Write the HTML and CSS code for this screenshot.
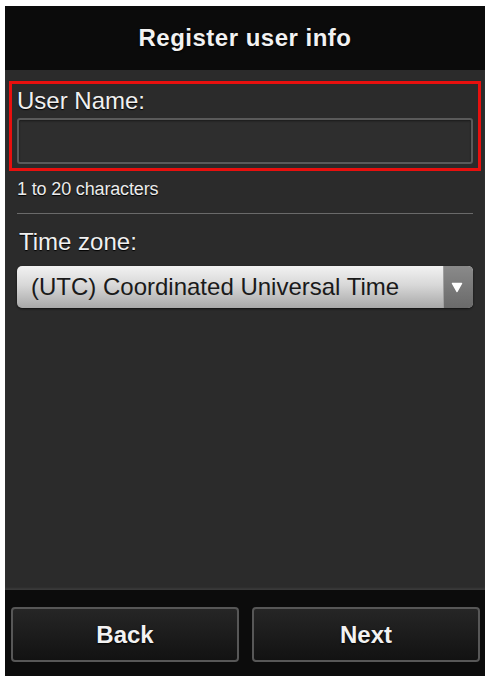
FILE: index.html
```html
<!DOCTYPE html>
<html>
<head>
<meta charset="utf-8">
<link rel="stylesheet" href="styles.css">
</head>
<body>
<div class="app">
  <header class="header"><h1 class="title">Register user info</h1></header>
  <main class="main">
    <div class="highlight">
      <div class="label">User Name:</div>
      <div class="input"></div>
    </div>
    <div class="hint">1 to 20 characters</div>
    <div class="divider"></div>
    <div class="label label-tz">Time zone:</div>
    <div class="select">
      <span class="select-text">(UTC) Coordinated Universal Time</span>
      <span class="select-btn"><svg width="12" height="11" viewBox="0 0 12 11"><path d="M1.5 1.5 L10.5 1.5 L6 9.5 Z" fill="#fff" stroke="#fff" stroke-width="1.5" stroke-linejoin="round"/></svg></span>
    </div>
  </main>
  <footer class="footer">
    <button class="btn">Back</button>
    <button class="btn">Next</button>
  </footer>
</div>
</body>
</html>
```
FILE: styles.css
```css
html, body { margin: 0; padding: 0; background: #fff; }
body { padding: 6px 5px 5px 5px; font-family: "Liberation Sans", Arial, sans-serif; }
.app { width: 480px; height: 670px; display: flex; flex-direction: column; }
.header { height: 64px; background: #0b0b0b; display: flex; align-items: center; justify-content: center; }
.title { margin: 0; color: #f2f2f2; font-size: 24px; font-weight: bold; letter-spacing: 0.5px; line-height: 28px; text-shadow: 0 1px 2px #000; }
.main { flex: 1; background: #2b2b2b; padding: 11px 4px 0 4px; box-shadow: inset 0 -2px 2px #3a3a3a; }
.highlight { border: 3px solid #e8100e; padding: 3px 5px 4px 5px; }
.label { color: #f0f0f0; font-size: 24px; line-height: 28px; text-shadow: 0 1px 1px #000; }
.input { margin-top: 3px; height: 42px; border: 2px solid #5a5a5a; border-radius: 3px; background: #2e2e2e; box-shadow: inset 0 1px 2px #1a1a1a; }
.hint { margin: 8px 8px 0 8px; color: #ececec; font-size: 18px; line-height: 20px; letter-spacing: -0.15px; text-shadow: 0 1px 1px #000; }
.divider { margin: 14px 8px 0 8px; height: 1px; background: #6a6a6a; }
.label-tz { margin: 14px 8px 0 10px; }
.select { margin: 10px 8px 0 8px; height: 42px; border-radius: 5px; display: flex; overflow: hidden; background: linear-gradient(#f2f2f2, #d8d8d8 45%, #a8a8a8); box-shadow: 0 1px 2px #111; }
.select-text { flex: 1; padding-left: 14px; font-size: 24px; line-height: 42px; color: #1a1a1a; white-space: nowrap; }
.select-btn { width: 30px; display: flex; align-items: center; justify-content: center; padding-right: 4px; box-sizing: border-box; background: linear-gradient(#8a8a8a, #6a6a6a); border-left: 1px solid #a0a0a0; }
.footer { height: 86px; background: #0c0c0c; display: flex; gap: 13px; padding: 17px 5px 0 6px; box-sizing: border-box; }
.btn { width: 228px; height: 55px; border: 2px solid #575757; border-radius: 4px; background: linear-gradient(#262626, #121212); color: #f2f2f2; font-family: "Liberation Sans", Arial, sans-serif; font-size: 24px; font-weight: bold; text-shadow: 0 1px 2px #000; }
```
